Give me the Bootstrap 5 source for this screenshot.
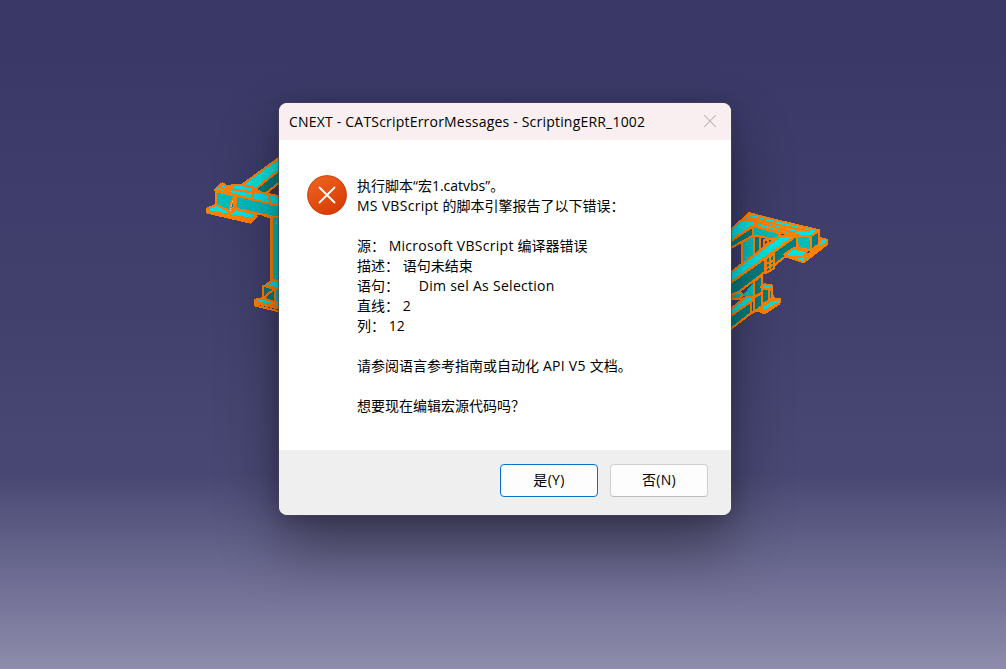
<!DOCTYPE html>
<html lang="zh-CN">
<head>
<meta charset="utf-8">
<meta name="viewport" content="width=device-width, initial-scale=1">
<title>CNEXT - CATScriptErrorMessages</title>
<link href="https://cdn.jsdelivr.net/npm/bootstrap@5.3.0/dist/css/bootstrap.min.css" rel="stylesheet">
<style>
body{font-family:"Open Sans","Noto Sans CJK SC",sans-serif;font-size:14px;line-height:20px;color:#000;background:linear-gradient(#383766 0%,#41406d 45%,#494874 71%,#8e8cac 100%);}
.scene{height:669px;}
.model{z-index:0;shape-rendering:crispEdges;}
.model g{stroke:#ff8000;stroke-width:6.500;stroke-linejoin:round;}
.lt{fill:#00e2e2}.md{fill:#00bcbc}.dk{fill:#007e7e}.ln{fill:none}
.dlg{width:452px;height:412px;margin:103px 0 0 279px;border-radius:9px;background:#fff;z-index:1;box-shadow:0 0 0 1px rgba(70,68,90,.65),0 30px 60px rgba(0,0,0,.38),0 2px 18px rgba(0,0,0,.18);}
.dlg .modal-header{height:37px;padding:0 14px 0 10px;background:#f9eff1;border:0;}
.dlg .modal-title{font-size:14px;line-height:20px;font-weight:400;letter-spacing:.2px;}
.dlg .modal-body{padding:36px 28px 0;gap:10px;}
.dlg .modal-footer{height:65px;padding:0 23px 5px;gap:12px;background:#efefef;border:0;}
.dlg .btn{width:98px;height:33px;margin:0;padding:0;font-size:14px;line-height:30px;letter-spacing:.3px;border-radius:4px;background:#fdfdfd;border:1px solid #d0d0d0;border-bottom-color:#bcbcbc;color:#000;}
.dlg .btn.first{border-color:#0073cf;}
.msg{white-space:pre;}
.msg span{letter-spacing:.28px;}
.msg .pad-in{letter-spacing:-.35px;}
.up{margin-top:-1px;}
.shut{margin-top:-2px;}
</style>
</head>
<body>
<main class="scene position-relative overflow-hidden">
<svg class="model position-absolute top-0 start-0" width="1006" height="669" viewBox="0 0 1006 669">
  <!-- left end of the frame -->
  <g transform="translate(200 150) scale(.3333)">
    <path class="lt" d="M125 105L245 18V55L165 118Z"/>
    <path class="dk" d="M165 118L245 55V92L195 132Z"/>
    <path class="md" d="M48 124L107 137V176L88 184L48 164Z"/>
    <path class="md" d="M107 137L245 168V206L107 176Z"/>
    <path class="lt" d="M44 120L67 100L80 108L125 104L158 113L172 126L245 140V168L160 149Z"/>
    <path class="ln" d="M58 112L160 128L172 126M72 118L107 137M95 106L88 124M160 128V149M205 136L212 162M160 113L158 128"/>
    <path class="lt" d="M22 176L48 164L90 184L84 194L24 184Z"/>
    <path class="lt" d="M86 196L107 176L168 192L158 207Z"/>
    <path class="ln" d="M22 176V188L152 218L172 198M24 184L152 211M107 137V176M90 184V196"/>
    <path d="M90 184L92 164L102 142L103 168Z" fill="#007e7e"/>
    <path d="M91 183L98 153" stroke="#fff5df" stroke-width="3" stroke-dasharray="3 4"/>
    <path class="ln" d="M168 190L185 192L200 199L245 206"/>
  </g>
  <g transform="translate(240 215) scale(.3333)">
    <path class="md" d="M95 5H125V200H95Z"/>
    <path class="ln" stroke-width="9" d="M94 5V200"/>
    <path class="lt" d="M77 210L98 195L125 200V220L108 222Z"/>
    <path class="dk" d="M69 212L105 222V262L69 250Z"/>
    <path class="md" d="M105 222H125V262H105Z"/>
    <path class="ln" d="M69 250L102 222"/>
    <path class="lt" d="M44 255L67 250L125 268V275L50 262Z"/>
    <path class="ln" d="M44 255V271L125 291M44 264L125 282"/>
  </g>
  <!-- right end of the frame -->
  <g transform="translate(725 205) scale(.3333)">
    <path class="md" d="M50 100L86 86V152L50 178Z"/>
    <path class="dk" d="M86 88L106 96V138L86 150Z"/>
    <path class="lt" d="M0 92L72 24L110 35L282 76L255 96L208 92L85 62L0 120Z"/>
    <path class="dk" d="M0 120L85 63V92L0 138Z"/>
    <path class="md" d="M85 63L165 85L158 98L140 104L112 95L85 92Z"/>
    <path class="md" d="M116 104H130V116L116 124Z" style="fill:#3c3b69"/>
    <path class="ln" d="M42 50L62 44L104 54L212 86M70 40L100 46L102 32M86 62L125 40M110 54L125 40M137 65L150 48M165 76L200 65M165 76V94M200 83L240 69M64 35L150 58L255 80"/>
    <path class="lt" d="M0 215L165 92L212 91L0 246Z"/>
    <path class="dk" d="M0 246L216 91V128L0 292Z"/>
    <path class="md" d="M216 91L255 94L262 136L218 130Z"/>
    <path class="dk" d="M258 93L283 76V116L258 136Z"/>
    <path class="lt" d="M178 148L206 130L245 139L232 160L204 158Z"/>
    <path class="lt" d="M284 99L305 104V118L236 172L184 154L204 158L240 156L283 120Z"/>
    <path class="ln" d="M236 162L305 112M216 128L258 137"/>
    <path class="dk" d="M121 162L147 148V190L121 205Z"/>
    <path class="ln" d="M124 158V200M136 154V193M147 184L165 165M121 178L147 166M121 192L147 178"/>
    <path class="md" d="M50 272L88 232V279Z" stroke="none"/>
    <path class="dk" d="M88 228L112 210V262L88 276Z"/>
    <path class="dk" d="M88 277L112 263V310L88 318Z"/>
    <path class="dk" d="M112 248L142 252V280L112 298Z"/>
    <path class="lt" d="M108 245L118 238L142 242V254L114 251Z"/>
    <path class="md" d="M12 282L26 266L48 263L53 272L44 282Z"/>
    <path class="lt" d="M0 325L64 275L88 278L78 292L0 345Z"/>
    <path class="dk" d="M0 345L78 290V324L0 386Z"/>
    <path class="lt" d="M100 310L142 285L165 282V291L120 318Z"/>
    <path class="ln" d="M78 324L100 316L118 325L165 294M88 277V320M112 250V314M132 250V290M142 270L150 285"/>
  </g>
</svg>

<section class="modal-content dlg position-relative" role="dialog" aria-labelledby="caption">
  <header class="modal-header rounded-top-3 d-flex align-items-center justify-content-between">
    <h1 class="modal-title" id="caption">CNEXT - CATScriptErrorMessages - ScriptingERR_1002</h1>
    <svg class="shut" width="14" height="14" viewBox="0 0 14 14"><path d="M1.200 1.200L12.800 12.800M12.800 1.200L1.200 12.800" stroke="#bdb8ba" stroke-width="1.100" fill="none"/></svg>
  </header>
  <div class="modal-body d-flex align-items-start">
    <svg class="up flex-shrink-0" width="40" height="40" viewBox="0 0 40 40">
      <defs><linearGradient id="red" x1=".2" y1="0" x2=".8" y2="1"><stop stop-color="#ef6322"/><stop offset="1" stop-color="#d63a00"/></linearGradient></defs>
      <circle cx="20" cy="20" r="19.700" fill="url(#red)"/><circle cx="20" cy="20" r="19.300" fill="none" stroke="#c33b08" stroke-width=".8"/>
      <path d="M12.500 12.500L27.500 27.500M27.500 12.500L12.500 27.500" stroke="#fff" stroke-width="1.800" stroke-linecap="round"/>
    </svg>
    <div class="msg"><div>执行脚本“宏1.catvbs”。</div><div><span>MS VBScript </span>的脚本引擎报告了以下错误：</div><br><div>源： <span>Microsoft VBScript </span>编译器错误</div><div>描述： 语句未结束</div><div>语句：<span class="pad-in">      </span><span>Dim sel As Selection</span></div><div>直线： 2</div><div>列： 12</div><br><div>请参阅语言参考指南或自动化<span> API V5 </span>文档。</div><br><div>想要现在编辑宏源代码吗？</div></div>
  </div>
  <footer class="modal-footer rounded-bottom-3 d-flex flex-nowrap align-items-center justify-content-end">
    <button class="btn first" type="button">是(Y)</button>
    <button class="btn" type="button">否(N)</button>
  </footer>
</section>
</main>
<script src="https://cdn.jsdelivr.net/npm/bootstrap@5.3.0/dist/js/bootstrap.bundle.min.js"></script>
</body>
</html>
